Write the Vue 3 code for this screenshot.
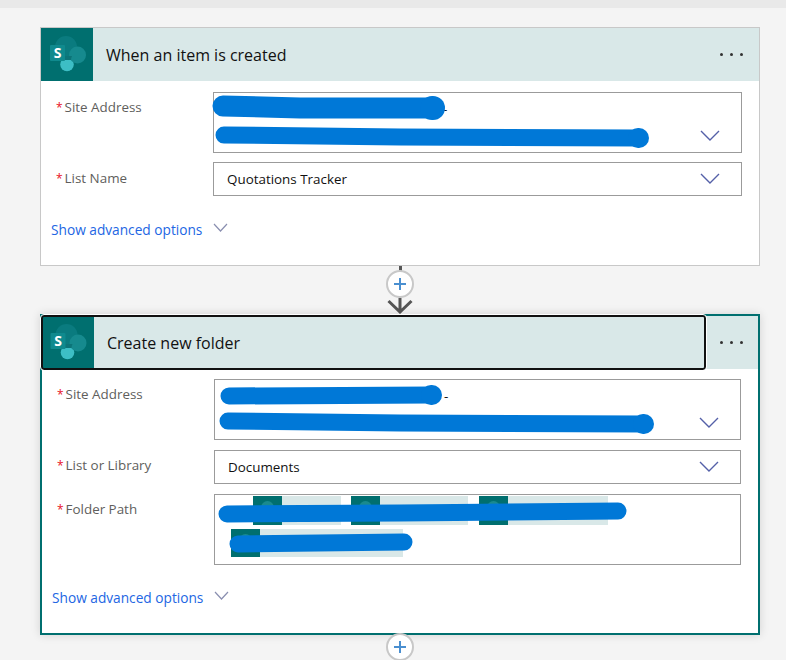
<script setup>
const chips = [
  [{ w: 59, gap: 0 }, { w: 88, gap: 10 }, { w: 100, gap: 11 }],
  [{ w: 143, gap: 0 }]
]
</script>

<template>
  <div class="app">
    <div class="strip"></div>
    <main class="page">
      <section class="card">
        <header class="head">
          <div class="logo">
            <svg width="52" height="53" viewBox="0 0 52 53">
              <circle cx="25" cy="19" r="11" fill="#0a7b7f" />
              <circle cx="26" cy="36.500" r="6.800" fill="#3dbec5" />
              <circle cx="36.500" cy="27" r="8.500" fill="#168a8e" />
              <path d="M20 28h11a9 9 0 0 0-1 4h-10z" fill="#0c7478" />
              <rect x="9" y="17" width="15" height="16" rx="1" fill="#0f8a8e" />
            </svg>
            <span class="s">S</span>
          </div>
          <h2 class="title">When an item is created</h2>
          <div class="dots"><i></i><i></i><i></i></div>
        </header>
        <div class="fields">
          <div class="row">
            <label class="label"><em>*</em>Site Address</label>
            <div class="input multi">
              <div class="lines"><span class="dash">-</span></div>
              <svg class="chev" width="20" height="12" viewBox="0 0 20 12"><path d="M1 1l9 9 9-9" /></svg>
            </div>
          </div>
          <div class="row">
            <label class="label lower"><em>*</em>List Name</label>
            <div class="input single">
              <span>Quotations Tracker</span>
              <svg class="chev" width="20" height="12" viewBox="0 0 20 12"><path d="M1 1l9 9 9-9" /></svg>
            </div>
          </div>
        </div>
        <a class="adv">Show advanced options
          <svg width="15" height="10" viewBox="0 0 15 10"><path d="M1 1l6.5 7L14 1" /></svg>
        </a>
      </section>

      <div class="link-a">
        <span class="stem"></span>
        <span class="plus"></span>
        <svg class="arrow" width="28" height="16" viewBox="0 0 28 16"><path d="M14 0v14M2.500 3L14 14 25.500 3" /></svg>
      </div>

      <section class="card active">
        <div class="focus"></div>
        <header class="head">
          <div class="logo">
            <svg width="52" height="53" viewBox="0 0 52 53">
              <circle cx="24.500" cy="19" r="11" fill="#0a7b7f" />
              <circle cx="25.500" cy="36.500" r="6.800" fill="#3dbec5" />
              <circle cx="36" cy="27" r="8.500" fill="#168a8e" />
              <path d="M19.500 28h11a9 9 0 0 0-1 4h-10z" fill="#0c7478" />
              <rect x="8.500" y="17" width="15" height="16" rx="1" fill="#0f8a8e" />
            </svg>
            <span class="s">S</span>
          </div>
          <h2 class="title">Create new folder</h2>
          <div class="dots"><i></i><i></i><i></i></div>
        </header>
        <div class="fields">
          <div class="row">
            <label class="label"><em>*</em>Site Address</label>
            <div class="input multi">
              <div class="lines"><span class="dash">-</span></div>
              <svg class="chev" width="20" height="12" viewBox="0 0 20 12"><path d="M1 1l9 9 9-9" /></svg>
            </div>
          </div>
          <div class="row">
            <label class="label lower"><em>*</em>List or Library</label>
            <div class="input single">
              <span>Documents</span>
              <svg class="chev" width="20" height="12" viewBox="0 0 20 12"><path d="M1 1l9 9 9-9" /></svg>
            </div>
          </div>
          <div class="row">
            <label class="label"><em>*</em>Folder Path</label>
            <div class="input path">
              <div v-for="(line, n) in chips" :key="n" class="chips" :class="'line' + n">
                <div v-for="(c, i) in line" :key="i" class="chip" :style="{ width: c.w + 29 + 'px', marginLeft: c.gap + 'px' }">
                  <span class="chip-icon"><b></b></span>
                </div>
              </div>
            </div>
          </div>
        </div>
        <a class="adv">Show advanced options
          <svg width="15" height="10" viewBox="0 0 15 10"><path d="M1 1l6.5 7L14 1" /></svg>
        </a>
      </section>

      <div class="link-b">
        <span class="stem"></span>
        <span class="plus"></span>
      </div>
    </main>

    <svg class="scribbles" width="786" height="660" viewBox="0 0 786 660">
      <path stroke-width="21" d="M223 106L300 108L432 108" />
      <path stroke-width="24" d="M432 108L433 108" />
      <path stroke-width="17" d="M224 135L400 137L637 138" />
      <path stroke-width="20" d="M638 138L639 138" />
      <path stroke-width="17" d="M229 396L432 395" />
      <path stroke-width="20" d="M431 395L432 395" />
      <path stroke-width="17" d="M228 421L400 423L643 424" />
      <path stroke-width="20" d="M643 424L644 424" />
      <path stroke-width="17" d="M227 514L400 513L618 511" />
      <path stroke-width="17" d="M238 544L404 542" />
    </svg>
  </div>
</template>

<style>
html, body { margin: 0; background: #f4f4f4; }
</style>

<style scoped>
.app {
  position: relative;
  width: 786px;
  height: 660px;
  overflow: hidden;
  background: #f4f4f4;
  font-family: "Open Sans", "Noto Sans", sans-serif;
  color: #201f1e;
}
.strip { height: 8px; background: #e9e9e9; }
.page {
  width: 720px;
  padding: 19px 0 0 40px;
}
.card {
  position: relative;
  box-sizing: border-box;
  width: 720px;
  height: 239px;
  border: 1px solid #c8c8c8;
  background: #fff;
}
.card.active {
  height: 321px;
  border: 2px solid #006f6f;
  box-shadow: 0 0 9px rgba(0, 0, 0, .14);
}
.focus {
  position: absolute;
  z-index: 2;
  left: -1px;
  top: -1px;
  box-sizing: border-box;
  width: 665px;
  height: 55px;
  border: 2px solid #111;
  border-radius: 3px;
  outline: 1px solid #fff;
}
.head {
  display: flex;
  align-items: center;
  height: 53px;
  background: #d9e8e8;
}
.logo {
  position: relative;
  flex: none;
  width: 52px;
  height: 53px;
  background: #006f6f;
}
.logo svg { display: block; }
.s {
  position: absolute;
  left: 9px;
  top: 16px;
  width: 15px;
  text-align: center;
  font-size: 14px;
  line-height: 18px;
  font-weight: 700;
  color: #fff;
}
.active .s { left: 8.500px; }
.title {
  flex: 1;
  margin: 0 0 0 13px;
  font-size: 16px;
  line-height: 20px;
  font-weight: 400;
  color: #111;
}
.dots {
  display: flex;
  gap: 7px;
  margin-right: 16px;
}
.active .dots { margin-right: 15px; }
.dots i {
  width: 3px;
  height: 3px;
  border-radius: 50%;
  background: #333;
}
.fields {
  display: flex;
  flex-direction: column;
  gap: 9px;
  padding: 11px 17px 0 15px;
}
.active .fields { gap: 10px; padding: 10px 17px 0 15px; }
.row { display: flex; }
.label {
  flex: none;
  width: 157px;
  padding-top: 6px;
  font-size: 13.400px;
  line-height: 18px;
  color: #605e5c;
}
.label.lower { padding-top: 7px; }
.active .label.lower { padding-top: 6px; }
.label em {
  font-style: normal;
  color: #e81123;
  margin-right: 2px;
  font-size: 12px;
}
.input {
  position: relative;
  box-sizing: border-box;
  flex: 1;
  display: flex;
  border: 1px solid #9b9b9b;
  background: #fff;
  font-size: 13.400px;
  color: #111;
}
.multi {
  height: 61px;
  align-items: flex-end;
  justify-content: space-between;
  padding-bottom: 10px;
}
.single {
  height: 34px;
  align-items: center;
  justify-content: space-between;
  padding-left: 13px;
}
.lines { align-self: flex-start; padding: 7px 0 0 229px; line-height: 18px; }
.chev { flex: none; margin-right: 21px; }
.chev path { fill: none; stroke: #5460a8; stroke-width: 1.400; }
.path {
  height: 71px;
  flex-direction: column;
  gap: 4px;
  padding-top: 1px;
}
.chips { display: flex; }
.line0 { padding-left: 38px; }
.line1 { padding-left: 16px; }
.chip {
  height: 29px;
  background: #d9e8e8;
}
.line1 .chip { height: 28px; }
.chip-icon {
  display: block;
  position: relative;
  overflow: hidden;
  width: 29px;
  height: 100%;
  background: #006f6f;
}
.chip-icon b {
  position: absolute;
  left: 8px;
  top: 5px;
  width: 13px;
  height: 13px;
  border-radius: 50%;
  background: #1a8a8e;
}
.adv {
  display: flex;
  align-items: center;
  margin: 25px 0 0 10px;
  font-size: 13.700px;
  line-height: 18px;
  color: #2266e3;
}
.active .adv { margin-top: 24px; }
.adv svg { margin: -4px 0 0 11px; }
.adv path { fill: none; stroke: #8a8fb0; stroke-width: 1.200; }
.link-a, .link-b {
  position: relative;
  display: flex;
  flex-direction: column;
  align-items: center;
}
.link-a { height: 48px; }
.link-b { height: 25px; }
.stem {
  width: 3px;
  height: 7px;
  background: #555;
}
.plus {
  position: relative;
  box-sizing: border-box;
  flex: none;
  width: 28px;
  height: 28px;
  border: 2px solid #c8c8c8;
  border-radius: 50%;
  background: #fff;
}
.link-a .plus { margin-top: -2px; }
.link-b .plus { margin-top: -2px; }
.plus::before, .plus::after {
  content: "";
  position: absolute;
  background: #4a8fd0;
}
.plus::before { left: 6px; right: 6px; top: 11px; height: 2px; }
.plus::after { top: 6px; bottom: 6px; left: 11px; width: 2px; }
.arrow { flex: none; }
.arrow path { fill: none; stroke: #555; stroke-width: 3; }
.scribbles {
  position: absolute;
  left: 0;
  top: 0;
  z-index: 3;
  pointer-events: none;
}
.scribbles path {
  fill: none;
  stroke: #0078d7;
  stroke-linecap: round;
  stroke-linejoin: round;
}
</style>
